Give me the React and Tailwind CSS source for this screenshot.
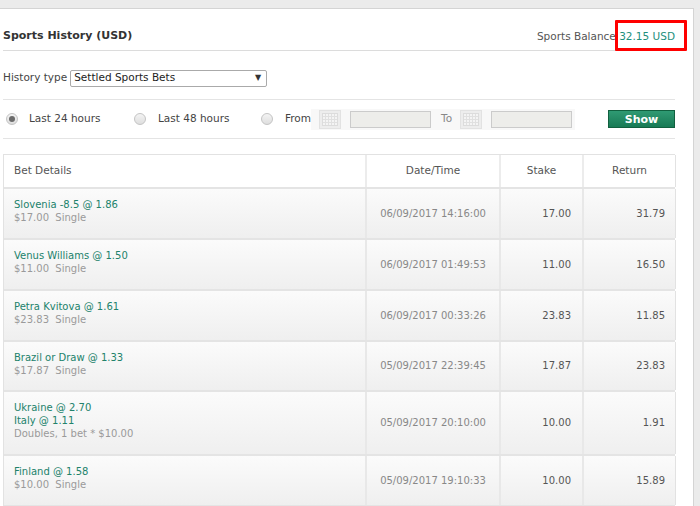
import React from 'react'

const bets = [
  { lines: ['Slovenia -8.5 @ 1.86'], sub: '$17.00\u00a0\u00a0Single', date: '06/09/2017 14:16:00', stake: '17.00', ret: '31.79', h: 'h-[51px]' },
  { lines: ['Venus Williams @ 1.50'], sub: '$11.00\u00a0\u00a0Single', date: '06/09/2017 01:49:53', stake: '11.00', ret: '16.50', h: 'h-[51px]' },
  { lines: ['Petra Kvitova @ 1.61'], sub: '$23.83\u00a0\u00a0Single', date: '06/09/2017 00:33:26', stake: '23.83', ret: '11.85', h: 'h-[51px]' },
  { lines: ['Brazil or Draw @ 1.33'], sub: '$17.87\u00a0\u00a0Single', date: '05/09/2017 22:39:45', stake: '17.87', ret: '23.83', h: 'h-[50px]' },
  { lines: ['Ukraine @ 2.70', 'Italy @ 1.11'], sub: 'Doubles, 1 bet * $10.00', date: '05/09/2017 20:10:00', stake: '10.00', ret: '1.91', h: 'h-[64px]' },
  { lines: ['Finland @ 1.58'], sub: '$10.00\u00a0\u00a0Single', date: '05/09/2017 19:10:33', stake: '10.00', ret: '15.89', h: 'h-[51px]' },
]

function Radio({ checked }) {
  return (
    <span className="w-[12px] h-[12px] rounded-full border border-[#c4c4c4] bg-gradient-to-b from-[#f4f4f4] to-[#dedede] flex items-center justify-center">
      {checked && <span className="w-[6px] h-[6px] rounded-full bg-[#6b6b6b]" />}
    </span>
  )
}

function Calendar() {
  return (
    <span className="w-[22px] h-[19px] bg-[#ededed] border border-[#e2e2e2] flex items-center justify-center">
      <svg width="16" height="13" viewBox="0 0 16 13">
        <rect x="0.5" y="0.5" width="15" height="12" fill="#f4f4f4" stroke="#dcdcdc" />
        {[3, 6, 9, 12].map((x) => (
          <line key={'v' + x} x1={x + 0.5} y1="1" x2={x + 0.5} y2="12" stroke="#e0e0e0" />
        ))}
        {[3, 6, 9].map((y) => (
          <line key={'h' + y} x1="1" y1={y + 0.5} x2="15" y2={y + 0.5} stroke="#e0e0e0" />
        ))}
      </svg>
    </span>
  )
}

export default function App() {
  return (
    <div className="w-[700px] h-[506px] bg-[#ebebeb] pt-2 overflow-hidden font-['DejaVu_Sans',Verdana,sans-serif]">
      <div className="relative w-[694px] h-[498px] bg-white border-t border-r border-[#d4d4d4]">
        <div className="w-[672px] ml-[3px]">
          {/* header */}
          <div className="flex items-end justify-between pt-[19px] pb-[5px] border-b border-[#dcdcdc]">
            <div className="text-[11px] font-bold text-[#333]">Sports History (USD)</div>
            <div className="text-[10.5px] text-[#555]">
              Sports Balance <span className="text-[#1e8f7c]">32.15 USD</span>
            </div>
          </div>

          {/* history type */}
          <div className="flex items-center gap-[3px] pt-[19px] pb-[12px] border-b border-[#e4e4e4] text-[10.5px] text-[#444]">
            <span>History type</span>
            <div className="w-[197px] h-[17px] border border-[#aaa] rounded-[2px] flex items-center justify-between pl-[3px] pr-[5px] text-[#222]">
              <span>Settled Sports Bets</span>
              <span className="text-[8px] text-[#333]">▼</span>
            </div>
          </div>

          {/* date filters */}
          <div className="flex items-center h-[39px] pt-[1px] border-b border-[#e4e4e4] text-[10.5px] text-[#444]">
            <div className="flex items-center pl-[3px] w-[131px]">
              <Radio checked />
              <span className="ml-[11px]">Last 24 hours</span>
            </div>
            <div className="flex items-center w-[127px]">
              <Radio />
              <span className="ml-[12px]">Last 48 hours</span>
            </div>
            <div className="flex items-center">
              <Radio />
              <span className="ml-[12px]">From</span>
            </div>
            <div className="flex items-center bg-[#f8f8f8] h-[21px] pl-[8px] pr-[3px]">
              <Calendar />
              <span className="ml-[9px] w-[81px] h-[17px] bg-[#ededea] border border-[#cbcbcb]" />
              <span className="ml-[10px] mr-[8px] text-[#888]">To</span>
              <Calendar />
              <span className="ml-[9px] w-[81px] h-[17px] bg-[#ededea] border border-[#cbcbcb]" />
            </div>
            <button className="ml-auto w-[67px] h-[18px] bg-gradient-to-b from-[#2f9a73] to-[#187a55] border border-[#11603f] text-white font-bold text-[11px] leading-none">
              Show
            </button>
          </div>

          {/* table */}
          <div className="mt-[15px] border-t border-l border-[#e2e2e2]">
            <div className="grid grid-cols-[363px_134px_83px_92px] h-[34px] text-[10.5px] text-[#555] border-b-2 border-[#e4e4e4]">
              <div className="flex items-center pl-[10px] border-r-2 border-[#ececec]">Bet Details</div>
              <div className="flex items-center justify-center border-r-2 border-[#ececec]">Date/Time</div>
              <div className="flex items-center justify-center border-r-2 border-[#ececec]">Stake</div>
              <div className="flex items-center justify-center border-r border-[#e2e2e2]">Return</div>
            </div>
            {bets.map((b, i) => (
              <div
                key={i}
                className={`grid grid-cols-[363px_134px_83px_92px] ${b.h} bg-gradient-to-b from-[#fbfbfb] to-[#efefef] border-b-2 border-[#e4e4e4]`}
              >
                <div className="pl-[10px] pt-[9px] text-[10px] leading-[13px] border-r-2 border-[#e8e8e8]">
                  {b.lines.map((l) => (
                    <div key={l} className="text-[#21826b]">{l}</div>
                  ))}
                  <div className="text-[#9a9a9a]">{b.sub}</div>
                </div>
                <div className="flex items-center justify-center text-[10px] text-[#888] border-r-2 border-[#e8e8e8]">{b.date}</div>
                <div className="flex items-center justify-end pr-[11px] text-[10px] text-[#555] border-r-2 border-[#e8e8e8]">{b.stake}</div>
                <div className="flex items-center justify-end pr-[10px] text-[10px] text-[#555] border-r border-[#e2e2e2]">{b.ret}</div>
              </div>
            ))}
          </div>
        </div>

        {/* red highlight box */}
        <div className="absolute left-[615px] top-[11px] w-[72px] h-[31px] border-[3px] border-[#ff0000] rounded-[1px]" />
      </div>
    </div>
  )
}
